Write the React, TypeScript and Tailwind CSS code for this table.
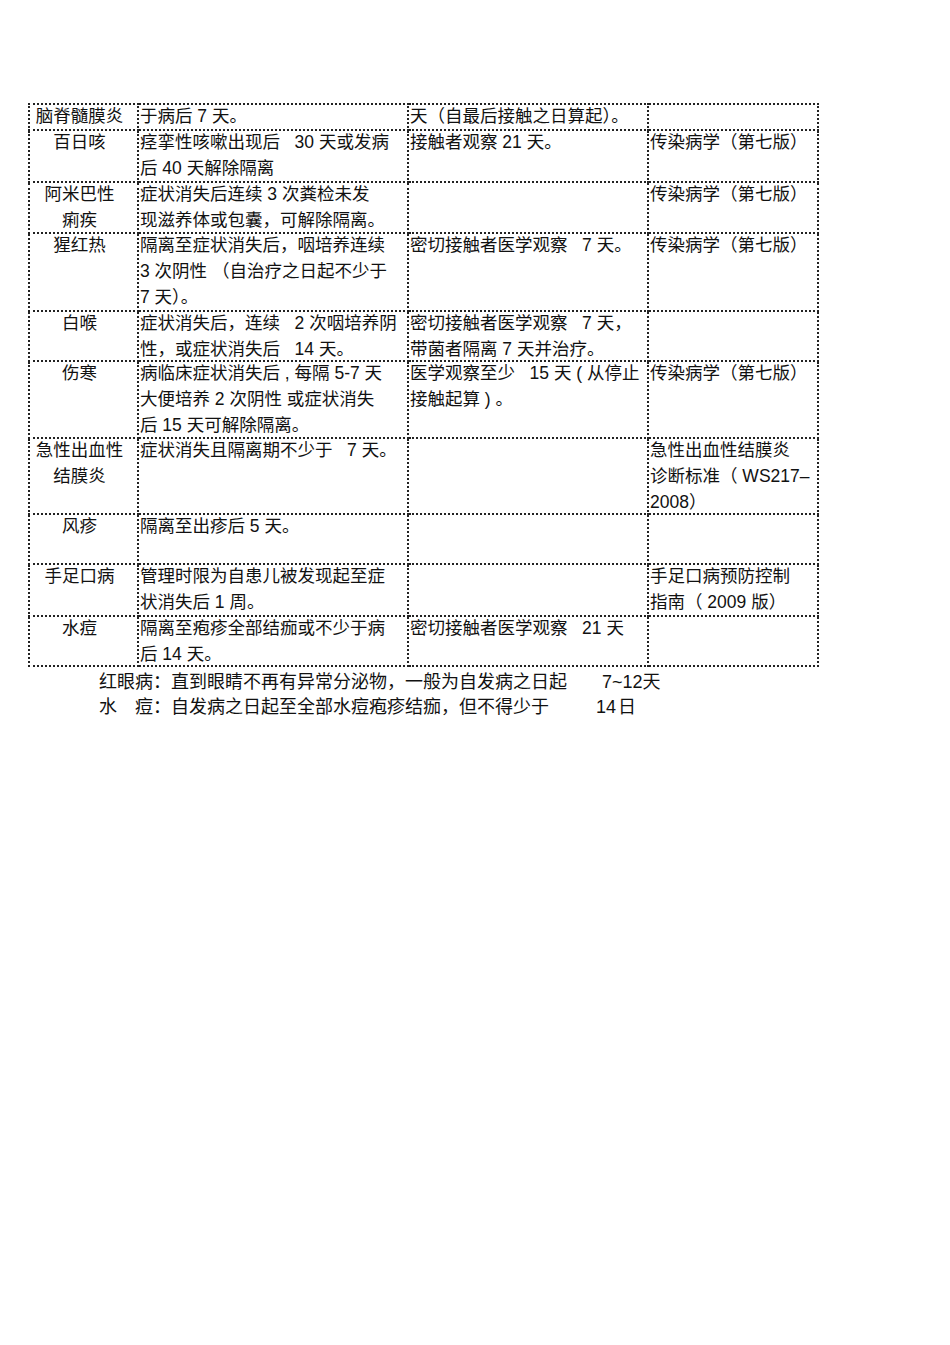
import React from 'react';

type Row = {
  h: number;
  cells: string[][];
};

const rows: Row[] = [
  { h: 26, cells: [['脑脊髓膜炎'], ['于病后 7 天。'], ['天（自最后接触之日算起）。'], []] },
  {
    h: 52,
    cells: [
      ['百日咳'],
      ['痉挛性咳嗽出现后\u00a0\u00a0 30 天或发病', '后 40 天解除隔离'],
      ['接触者观察 21 天。'],
      ['传染病学（第七版）'],
    ],
  },
  {
    h: 51,
    cells: [
      ['阿米巴性', '痢疾'],
      ['症状消失后连续 3 次粪检未发', '现滋养体或包囊，可解除隔离。'],
      [],
      ['传染病学（第七版）'],
    ],
  },
  {
    h: 78,
    cells: [
      ['猩红热'],
      ['隔离至症状消失后，咽培养连续', '3 次阴性 （自治疗之日起不少于', '7 天）。'],
      ['密切接触者医学观察\u00a0\u00a0 7 天。'],
      ['传染病学（第七版）'],
    ],
  },
  {
    h: 50,
    cells: [
      ['白喉'],
      ['症状消失后，连续\u00a0\u00a0 2 次咽培养阴', '性，或症状消失后\u00a0\u00a0 14 天。'],
      ['密切接触者医学观察\u00a0\u00a0 7 天，', '带菌者隔离 7 天并治疗。'],
      [],
    ],
  },
  {
    h: 77,
    cells: [
      ['伤寒'],
      ['病临床症状消失后 , 每隔 5-7 天', '大便培养 2 次阴性 或症状消失', '后 15 天可解除隔离。'],
      ['医学观察至少\u00a0\u00a0 15 天 ( 从停止', '接触起算 ) 。'],
      ['传染病学（第七版）'],
    ],
  },
  {
    h: 76,
    cells: [
      ['急性出血性', '结膜炎'],
      ['症状消失且隔离期不少于\u00a0\u00a0 7 天。'],
      [],
      ['急性出血性结膜炎', '诊断标准（ WS217–', '2008）'],
    ],
  },
  { h: 50, cells: [['风疹'], ['隔离至出疹后 5 天。'], [], []] },
  {
    h: 52,
    cells: [
      ['手足口病'],
      ['管理时限为自患儿被发现起至症', '状消失后 1 周。'],
      [],
      ['手足口病预防控制', '指南（ 2009 版）'],
    ],
  },
  {
    h: 50,
    cells: [
      ['水痘'],
      ['隔离至疱疹全部结痂或不少于病', '后 14 天。'],
      ['密切接触者医学观察\u00a0\u00a0 21 天'],
      [],
    ],
  },
];

const colWidths = [109, 270, 240, 170];

export default function App() {
  return (
    <div
      className="min-h-[1345px] w-[950px] bg-white pl-[28px] pt-[103px] text-[17.5px] leading-[26px] text-[#111]"
      style={{ fontFamily: '"Liberation Sans", "Noto Sans CJK SC", sans-serif' }}
    >
      <table className="table-fixed border-collapse">
        <colgroup>
          {colWidths.map((w, i) => (
            <col key={i} style={{ width: w }} />
          ))}
        </colgroup>
        <tbody>
          {rows.map((row, ri) => (
            <tr key={ri}>
              {row.cells.map((lines, ci) => (
                <td
                  key={ci}
                  className={
                    ci === 0
                      ? 'border-2 border-dotted border-[#222] py-0 pl-0 pr-[8px] text-center align-top'
                      : 'border-2 border-dotted border-[#222] py-0 pl-px pr-0 text-left align-top'
                  }
                >
                  {/* fixed box so the row keeps the reference height */}
                  <div className="overflow-visible" style={{ height: row.h - 2 }}>
                    <div className="relative -top-[2px]">
                      {lines.map((l, li) => (
                        <div key={li} className="whitespace-nowrap">
                          {l}
                        </div>
                      ))}
                    </div>
                  </div>
                </td>
              ))}
            </tr>
          ))}
        </tbody>
      </table>

      {/* notes under the table */}
      <div className="mt-[3px] pl-[71px] text-[18px] leading-[25px]">
        <div className="flex whitespace-nowrap">
          <span>红眼病：直到眼睛不再有异常分泌物，一般为自发病之日起</span>
          <span className="ml-[35px]">7~12天</span>
        </div>
        <div className="flex whitespace-nowrap">
          <span>水　痘：自发病之日起至全部水痘疱疹结痂，但不得少于</span>
          <span className="ml-[47px]">14</span>
          <span className="ml-[2px]">日</span>
        </div>
      </div>
    </div>
  );
}
